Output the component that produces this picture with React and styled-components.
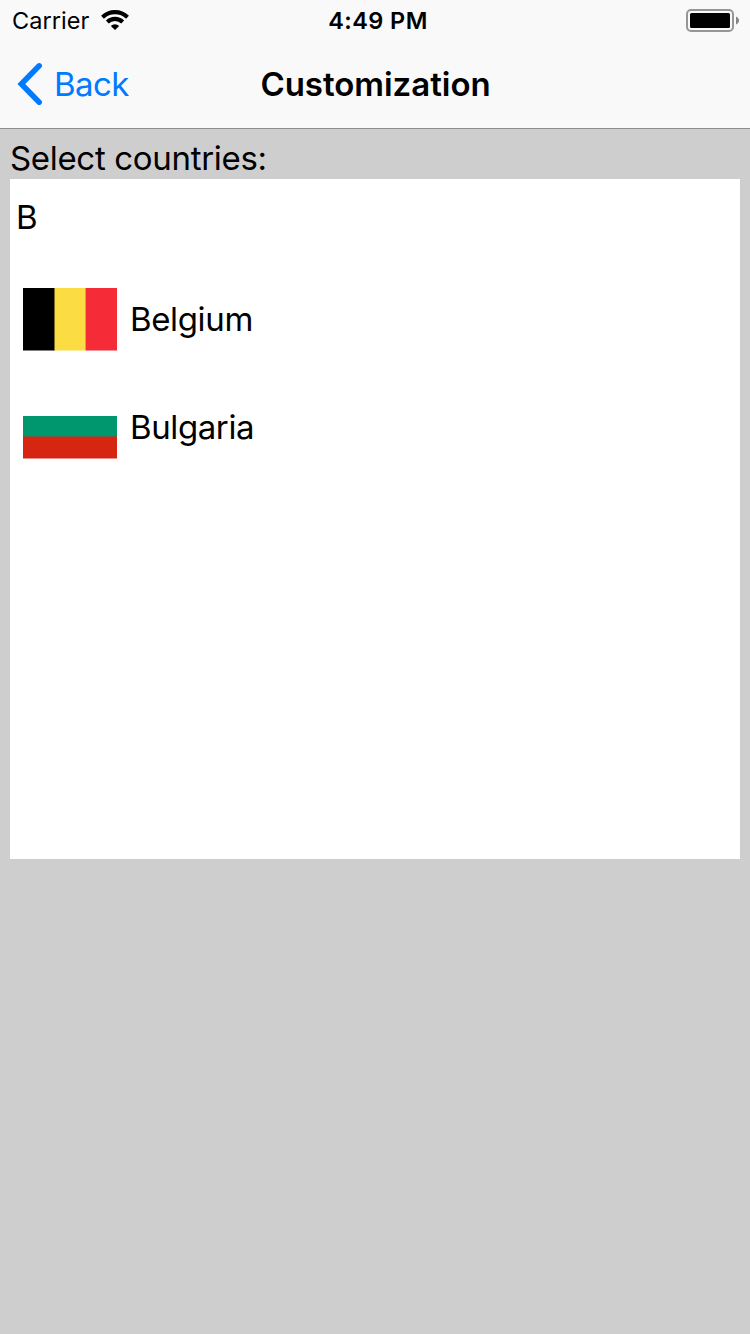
import React from "react";
import styled, { createGlobalStyle } from "styled-components";

const Global = createGlobalStyle`
  * { box-sizing: border-box; }
  body { margin: 0; background: #cecece; }
`;
const Screen = styled.div`
  width: 750px; height: 1334px; background: #cecece; color: #000;
  font-family: Inter, "Liberation Sans", sans-serif;
  overflow: hidden;
`;
const Header = styled.header`
  height: 129px; background: #f9f9f9; border-bottom: 1px solid #8e8e8e;
`;
const StatusBar = styled.div`
  height: 41px; padding: 1px 10px 0 12px;
  display: grid; grid-template-columns: 1fr auto 1fr; align-items: center;
`;
const Label = styled.span`
  display: block; white-space: nowrap; width: max-content;
  font-size: ${(p) => p.$size}px; font-weight: ${(p) => p.$weight || 400};
  letter-spacing: ${(p) => p.$track || 0}px; line-height: 40px;
`;
const Time = styled(Label)`
  margin-left: 4px;
`;
const Network = styled.div`
  display: flex; align-items: center; gap: 11px;
`;
const Battery = styled.svg`
  justify-self: end; display: block;
`;
const Wifi = styled.svg`
  display: block; margin-bottom: 2px;
`;
const NavBar = styled.nav`
  height: 86px; padding: 0 17px;
  display: grid; grid-template-columns: 1fr auto 1fr; align-items: center;
`;
const Back = styled.a`
  display: flex; align-items: center; gap: 11px; color: #007aff;
`;
const Title = styled(Label)`
  margin-left: 1px;
`;
const Content = styled.main`
  padding: 9px 10px 0;
`;
const List = styled.section`
  margin-top: 1px; height: 680px; background: #fff; padding: 18px 6px 0;
`;
const Row = styled.div`
  height: 108px; display: flex; align-items: center; gap: 13px; padding-left: 7px;
`;
const Rows = styled.div`
  padding-top: 28px;
`;

const Belgium = () => (
  <svg width="94" height="63" viewBox="0 0 94 63">
    <path fill="#000" d="M0 0h32v62.4H0z" />
    <path fill="#fbdc43" d="M31.5 0h32v62.4h-32z" />
    <path fill="#f52b38" d="M62.6 0H94v62.4H62.6z" />
  </svg>
);
const Bulgaria = () => (
  <svg width="94" height="63" viewBox="0 0 94 63">
    <path fill="#fff" d="M0 0h94v21H0z" />
    <path fill="#00966e" d="M0 20h94v21H0z" />
    <path fill="#d62612" d="M0 40.5h94v21.9H0z" />
  </svg>
);

export default function App() {
  return (
    <Screen>
      <Global />
      <Header>
        <StatusBar>
          <Network>
            <Label $size={23.5} $track={0.07}>Carrier</Label>
            <Wifi width="28" height="20" viewBox="0 0 28 20">
              <path fill="none" stroke="#000" strokeWidth="4.1" d="M1.5 7.2a18 18 0 0 1 25 0M6.3 12a11.1 11.1 0 0 1 15.4 0" />
              <path d="M14 20l-4.2-4.1a6.1 6.1 0 0 1 8.4 0z" />
            </Wifi>
          </Network>
          <Time $size={23.5} $weight={560} $track={0.45}>4:49 PM</Time>
          <Battery width="54" height="24" viewBox="0 0 54 24">
            <rect x="1" y="1" width="46" height="21" rx="4" fill="none" stroke="#969696" strokeWidth="2" />
            <rect x="4" y="4" width="40" height="15" rx="1.5" />
            <path fill="#858585" d="M50 7.5c4 1.5 4 6.5 0 8z" />
          </Battery>
        </StatusBar>
        <NavBar>
          <Back>
            <svg width="26" height="44" viewBox="0 0 26 44">
              <path d="M22.2 3.8L4.3 22l17.9 18.2" fill="none" stroke="#007aff" strokeWidth="5.5" strokeLinecap="round" />
            </svg>
            <Label $size={33} $track={-0.55}>Back</Label>
          </Back>
          <Title $size={33} $weight={590} $track={-0.03}>Customization</Title>
        </NavBar>
      </Header>
      <Content>
        <Label $size={33} $track={-0.32}>Select countries:</Label>
        <List>
          <Label $size={33}>B</Label>
          <Rows>
            <Row><Belgium /><Label $size={33} $track={-0.36}>Belgium</Label></Row>
            <Row><Bulgaria /><Label $size={33} $track={-0.4}>Bulgaria</Label></Row>
          </Rows>
        </List>
      </Content>
    </Screen>
  );
}
